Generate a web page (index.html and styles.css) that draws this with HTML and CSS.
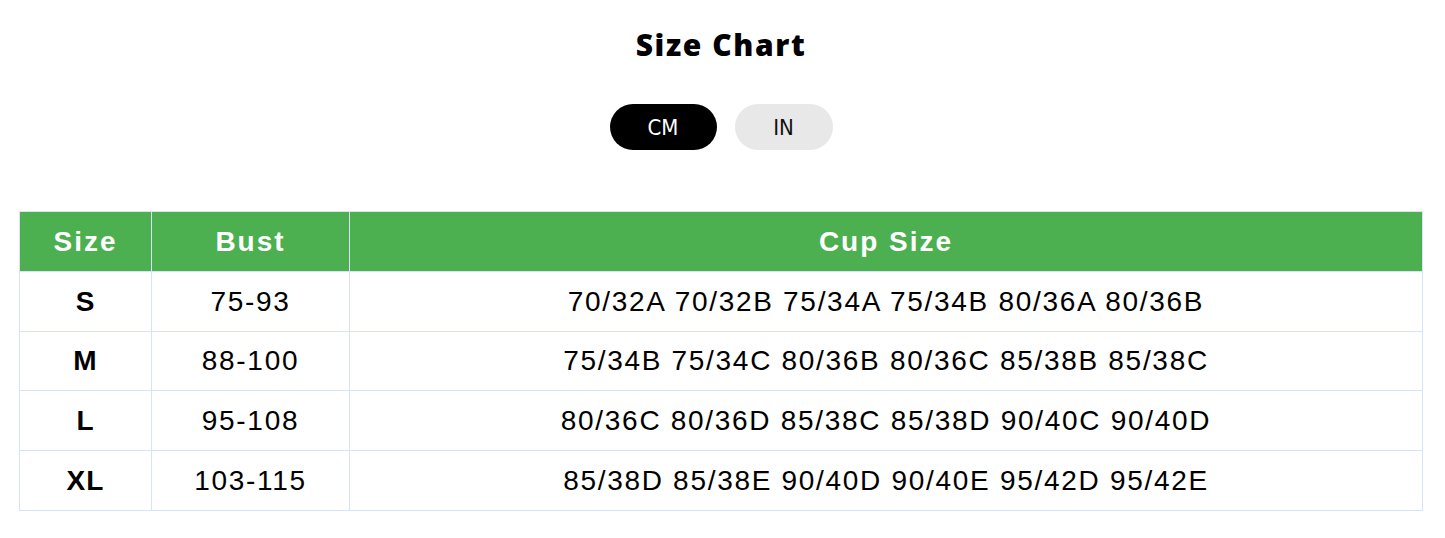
FILE: index.html
```html
<!DOCTYPE html>
<html lang="en">
<head>
<meta charset="utf-8">
<title>Size Chart</title>
<link rel="stylesheet" href="styles.css">
</head>
<body>
<main class="page">
  <h1 class="title">Size Chart</h1>
  <div class="units">
    <button class="unit unit-active">CM</button>
    <button class="unit">IN</button>
  </div>
  <table class="chart">
    <colgroup>
      <col class="col-size">
      <col class="col-bust">
      <col class="col-cup">
    </colgroup>
    <thead>
      <tr><th>Size</th><th>Bust</th><th>Cup Size</th></tr>
    </thead>
    <tbody>
      <tr><td class="size">S</td><td>75-93</td><td>70/32A 70/32B 75/34A 75/34B 80/36A 80/36B</td></tr>
      <tr><td class="size">M</td><td>88-100</td><td>75/34B 75/34C 80/36B 80/36C 85/38B 85/38C</td></tr>
      <tr><td class="size">L</td><td>95-108</td><td>80/36C 80/36D 85/38C 85/38D 90/40C 90/40D</td></tr>
      <tr><td class="size">XL</td><td>103-115</td><td>85/38D 85/38E 90/40D 90/40E 95/42D 95/42E</td></tr>
    </tbody>
  </table>
</main>
</body>
</html>
```

FILE: styles.css
```css
* { box-sizing: border-box; }

html, body {
  margin: 0;
  background: #ffffff;
}

body {
  font-family: "Liberation Sans", Arial, sans-serif;
  color: #000;
}

.page {
  padding: 25px 22px 0 19px;
  display: flex;
  flex-direction: column;
  align-items: center;
}

.title {
  margin: 0;
  font-family: "Open Sans", "Lato", sans-serif;
  font-weight: 800;
  font-size: 30px;
  line-height: 40px;
  letter-spacing: 1.6px;
  color: #000;
}

.units {
  margin-top: 39px;
  display: flex;
  gap: 18px;
}

.unit {
  height: 46px;
  border: none;
  border-radius: 23px;
  background: #e8e8e8;
  color: #111;
  font-family: "DejaVu Sans Condensed", "DejaVu Sans", sans-serif;
  font-stretch: condensed;
  font-size: 22px;
  padding: 0;
  width: 98px;
  cursor: pointer;
}

.unit-active {
  width: 107px;
  background: #000;
  color: #fff;
}

.chart {
  margin-top: 61px;
  width: 100%;
  border-collapse: collapse;
  table-layout: fixed;
}

.col-size { width: 132px; }
.col-bust { width: 198px; }

.chart th,
.chart td {
  border: 1px solid #d9e2fb;
  height: 60px;
  padding: 0;
  text-align: center;
  vertical-align: middle;
  font-size: 28px;
}

.chart tbody tr:nth-child(2) td { height: 59px; }

.chart th {
  background: #4caf50;
  color: #fff;
  font-weight: 700;
  letter-spacing: 2px;
}

.chart td {
  letter-spacing: 1.7px;
}

.chart td.size {
  font-weight: 700;
  letter-spacing: 1px;
}
```
